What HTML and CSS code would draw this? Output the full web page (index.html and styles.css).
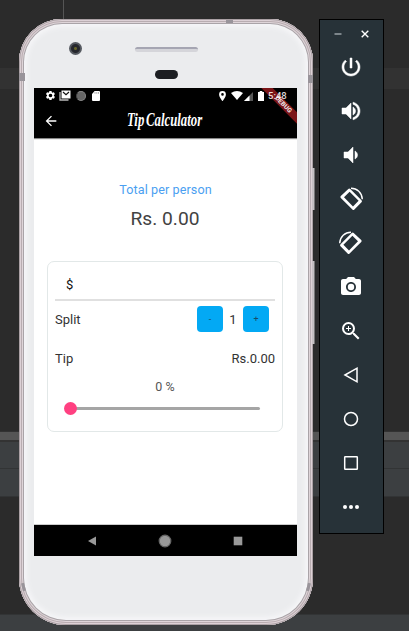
FILE: index.html
```html
<!DOCTYPE html>
<html lang="en">
<head>
<meta charset="utf-8">
<title>Tip Calculator</title>
<link rel="stylesheet" href="styles.css">
</head>
<body>
<div class="guide"></div>
<main class="desk">
  <section class="phone">
    <i class="key key-power"></i><i class="key key-volume"></i>
    <i class="seam seam-left"></i><i class="seam seam-right"></i><i class="seam seam-top"></i>
    <i class="seam seam-low-left"></i><i class="seam seam-low-right"></i>
    <header class="forehead">
      <span class="lens"></span>
      <div class="ear"><span class="speaker"></span><span class="sensor"></span></div>
    </header>
    <div class="screen">
      <div class="status">
        <svg class="s-gear" width="11" height="11" viewBox="0 0 24 24"><path fill-rule="evenodd" d="M19.4 13l.1-1-.1-1 2.1-1.600c.2-.2.3-.4.1-.7l-2-3.400c-.1-.2-.4-.3-.6-.2l-2.500 1-1.700-1-.4-2.600c0-.3-.2-.5-.5-.5h-4c-.3 0-.5.2-.5.5L9 5.100l-1.700 1-2.500-1c-.2-.1-.5 0-.6.2l-2 3.400c-.1.2 0 .5.1.7L4.500 11v2l-2.200 1.600c-.1.2-.2.5-.1.7l2 3.400c.1.2.4.3.6.2l2.500-1 1.700 1 .4 2.600c0 .3.2.5.5.5h4c.3 0 .5-.2.5-.5l.4-2.600 1.700-1 2.500 1c.2.1.5 0 .6-.2l2-3.400c.2-.3.1-.5-.1-.7zM12 16a4 4 0 1 1 0-8 4 4 0 0 1 0 8z"/></svg>
        <svg class="s-mail" width="12" height="11" viewBox="0 0 12 11"><path d="M1 2v8h8.500" fill="none" stroke="#bbb" stroke-width="1.300"/><path d="M2.500.5h9v8h-9z"/><path d="M4 2l3 2.600L10 2" fill="none" stroke="#111" stroke-width="1.200"/></svg>
        <span class="s-ball"></span>
        <svg class="s-card" width="8" height="10" viewBox="0 0 8 10"><path d="M2.600 0H7q1 0 1 1v8q0 1-1 1H1q-1 0-1-1V3z"/><path d="M3 1.200v1.500M4.800 1.200v1.500M6.500 1.200v1.500" stroke="#777" stroke-width=".7"/></svg>
        <svg class="s-pin" width="7" height="10" viewBox="0 0 7 10"><path fill-rule="evenodd" d="M3.500 0A3.400 3.400 0 0 0 .1 3.400C.1 6 3.500 10 3.500 10s3.400-4 3.400-6.600A3.400 3.400 0 0 0 3.500 0zm0 4.700a1.300 1.300 0 1 1 0-2.600 1.300 1.300 0 0 1 0 2.600z"/></svg>
        <svg class="s-wifi" width="12" height="9" viewBox="0 0 12 9"><path d="M0 2Q6-2 12 2L6 9z"/></svg>
        <svg class="s-cell" width="9" height="9" viewBox="0 0 9 9"><path fill="#555" d="M0 9L9 0v9z"/><path d="M0 9l5.500-5.500V9z"/></svg>
        <svg class="s-batt" width="6" height="10" viewBox="0 0 6 10"><path d="M1.700 0h2.600v1H6v9H0V1h1.700z"/></svg>
        <span class="clock">5:48</span>
      </div>
      <div class="debug"><span>DEBUG</span></div>
      <div class="appbar">
        <svg class="back" width="16" height="16" viewBox="0 0 24 24"><path d="M20 11H7.830l5.590-5.590L12 4l-8 8 8 8 1.410-1.410L7.830 13H20z"/></svg>
        <h1>Tip Calculator</h1>
      </div>
      <div class="content">
        <p class="label">Total per person</p>
        <p class="total">Rs. 0.00</p>
        <div class="card">
          <div class="amount">$</div>
          <div class="row split"><span>Split</span><div class="stepper"><button>-</button><span>1</span><button>+</button></div></div>
          <div class="row tip"><span>Tip</span><span>Rs.0.00</span></div>
          <div class="percent">0 %</div>
          <div class="slider"><span class="thumb"></span></div>
        </div>
      </div>
      <nav class="nav">
        <svg width="10" height="10" viewBox="0 0 10 10"><path d="M1 5l8-4.500v9z"/></svg>
        <svg width="14" height="14" viewBox="0 0 14 14"><circle cx="7" cy="7" r="5.800" fill="#999" stroke="#666" stroke-width="1.200"/></svg>
        <svg width="10" height="10" viewBox="0 0 10 10"><path d="M.7.7h8.600v8.600H.7z"/></svg>
      </nav>
    </div>
  </section>
  <aside class="tools">
    <div class="window">
      <svg width="8" height="8" viewBox="0 0 8 8"><path d="M.5 4h7" stroke="#9aa2a6" stroke-width="1.500"/></svg>
      <svg width="8" height="8" viewBox="0 0 8 8"><path d="M.7.7l6.600 6.600M7.300.7L.7 7.300" stroke="#fff" stroke-width="1.400"/></svg>
    </div>
    <svg class="heavy" viewBox="0 0 24 24"><path d="M13 3h-2v10h2V3zm4.830 2.170l-1.420 1.420C17.990 7.860 19 9.810 19 12c0 3.870-3.130 7-7 7s-7-3.130-7-7c0-2.190 1.010-4.140 2.580-5.420L6.170 5.170C4.230 6.820 3 9.260 3 12c0 4.970 4.030 9 9 9s9-4.030 9-9c0-2.740-1.230-5.180-3.170-6.830z"/></svg>
    <svg class="heavy" viewBox="0 0 24 24"><path d="M3 9v6h4l5 5V4L7 9H3zm13.500 3c0-1.770-1.020-3.290-2.500-4.030v8.050c1.480-.73 2.500-2.250 2.500-4.020zM14 3.230v2.060c2.890.86 5 3.540 5 6.710s-2.110 5.850-5 6.710v2.060c4.010-.91 7-4.490 7-8.770s-2.990-7.860-7-8.770z"/></svg>
    <svg class="heavy" viewBox="0 0 24 24"><path d="M18.500 12c0-1.770-1.020-3.290-2.500-4.030v8.050c1.480-.73 2.500-2.250 2.500-4.020zM5 9v6h4l5 5V4L9 9H5z"/></svg>
    <svg viewBox="0 0 24 24"><path fill-rule="evenodd" d="M9.300 1.900q1-.9 2 .1L22.500 13.200q1 1 0 2l-7.100 7.200q-1 1-2 0L1.800 10.900q-1-1 0-2zM10.600 4.700L5 10.300l9 9.100 5.600-5.700z"/><path d="M12 1.300c6 0 11 4.500 11.300 11" fill="none" stroke="#fff" stroke-width="1.400"/></svg>
    <svg class="mirror" viewBox="0 0 24 24"><path fill-rule="evenodd" d="M9.300 1.900q1-.9 2 .1L22.500 13.200q1 1 0 2l-7.100 7.200q-1 1-2 0L1.800 10.900q-1-1 0-2zM10.600 4.700L5 10.300l9 9.100 5.600-5.700z"/><path d="M12 1.300c6 0 11 4.500 11.300 11" fill="none" stroke="#fff" stroke-width="1.400"/></svg>
    <svg viewBox="0 0 24 24"><path fill-rule="evenodd" d="M9 2L7.170 4H4c-1.100 0-2 .9-2 2v12c0 1.100.9 2 2 2h16c1.100 0 2-.9 2-2V6c0-1.100-.9-2-2-2h-3.170L15 2H9zm3 15c-2.760 0-5-2.240-5-5s2.240-5 5-5 5 2.240 5 5-2.240 5-5 5z"/><circle cx="12" cy="12" r="3.200"/></svg>
    <svg viewBox="0 0 24 24"><path d="M15.500 14h-.79l-.28-.27A6.471 6.471 0 0 0 16 9.500 6.500 6.500 0 1 0 9.500 16c1.610 0 3.090-.59 4.230-1.570l.27.28v.79l5 4.990L20.490 19l-4.990-5zm-6 0C7.010 14 5 11.990 5 9.500S7.010 5 9.500 5 14 7.010 14 9.500 11.990 14 9.500 14zM12 10h-2v2H9v-2H7V9h2V7h1v2h2v1z"/></svg>
    <svg class="line" viewBox="0 0 24 24"><path d="M6 12l12-6.800v13.600z"/></svg>
    <svg class="line" viewBox="0 0 24 24"><circle cx="12" cy="12" r="6.500"/></svg>
    <svg class="line" viewBox="0 0 24 24"><rect x="5.700" y="5.700" width="12.600" height="12.600" rx=".5"/></svg>
    <svg viewBox="0 0 24 24"><circle cx="6" cy="12" r="2"/><circle cx="12" cy="12" r="2"/><circle cx="18" cy="12" r="2"/></svg>
  </aside>
</main>
</body>
</html>
```
FILE: styles.css
```css
* { box-sizing: border-box; }
body {
  margin: 0; width: 409px; height: 631px; overflow: hidden; position: relative;
  font-family: Roboto, sans-serif;
  background: linear-gradient(#2b2b2b 68px, #323232 68px 89px, #2b2b2b 89px 431px, #323232 431px 432px, #555 432px 440px, #333 440px 442px, #3c3f41 442px 468px, #323435 468px 469px, #3c3f41 469px 496px, #323435 496px 497px, #2b2b2b 497px 614px, #323435 614px 615px, #3c3f41 615px);
}
svg { display: block; fill: #fff; flex: none; }
.guide { position: absolute; left: 63px; top: 0; width: 1px; height: 20px; background: #555; }
.desk { display: flex; align-items: flex-start; gap: 6px; padding: 19px 0 0 19px; }
.phone {
  position: relative; width: 294px; height: 606px; padding: 0 16px 0 15px; flex: none;
  border-radius: 43px 43px 47px 47px; background: #ebecee;
  box-shadow: inset 0 0 0 1px #aaa0a4, inset 0 0 0 2px #ddd1d6, inset 0 0 0 3px #b9adb1, inset 0 0 0 4px #dfd5d9, inset 0 0 0 5px #aaa4a8, inset 0 0 5px 8px #f6f6f8;
}
.key { position: absolute; right: -2px; width: 3px; background: #c5bfc2; border-right: 1px solid #777; }
.key-power { top: 149px; height: 42px; }
.key-volume { top: 242px; height: 83px; }
.seam { position: absolute; background: #99949a; }
.seam-left { left: 0; top: 54px; width: 6px; height: 8px; }
.seam-right { right: 0; top: 56px; width: 5px; height: 8px; }
.seam-top { left: 207px; top: 1px; width: 7px; height: 3px; }
.seam-low-left { left: 3px; top: 564px; width: 3px; height: 8px; transform: rotate(-14deg); }
.seam-low-right { right: 3px; top: 564px; width: 3px; height: 8px; transform: rotate(14deg); }
.forehead { height: 69px; display: flex; padding: 23px 0 0 35px; }
.lens { width: 13px; height: 13px; border-radius: 50%; background: radial-gradient(circle, #65632a 0 1px, #25272d 2px 4px, #555960 5px); }
.ear { display: flex; flex-direction: column; align-items: center; margin-left: 53px; width: 63px; padding-top: 5px; gap: 18px; }
.speaker { width: 63px; height: 5px; border-radius: 3px; background: #d5d5da; border-top: 2px solid #a5a5b2; }
.sensor { width: 23px; height: 9px; border-radius: 5px; background: #1c1e22; }
.screen { position: relative; width: 263px; height: 468px; background: #fff; display: flex; flex-direction: column; overflow: hidden; }
.status { height: 15px; background: #000; display: flex; align-items: center; padding-left: 11px; }
.s-mail { margin-left: 3px; }
.s-ball { width: 10px; height: 10px; border-radius: 50%; margin-left: 5px; background: #666; border: 1px solid #888; border-left-color: #444; }
.s-card { margin-left: 6px; }
.s-pin { margin-left: 119px; }
.s-wifi { margin-left: 5px; }
.s-cell { margin: 1px 0 0 1px; }
.s-batt { margin-left: 5px; }
.clock { position: relative; z-index: 2; color: #fff; font-size: 9.500px; line-height: 15px; font-weight: 500; margin-left: 4px; opacity: .85; }
.debug { position: absolute; left: 217px; top: 11px; width: 62px; height: 8px; background: #7b1518; transform: rotate(45deg); text-align: center; color: #e8dede; font-size: 6.500px; line-height: 8px; font-weight: 900; }
.debug span { display: block; padding-left: 4px; }
.appbar { height: 35px; flex: none; background: #000; display: flex; align-items: center; padding-left: 9px; box-shadow: 0 1px 1px #888; }
.appbar h1 { margin: 0 0 2px 68px; font: italic bold 18px/26px "Liberation Serif", serif; color: #fff; white-space: nowrap; word-spacing: -2px; transform: scaleX(.71); transform-origin: left center; }
.content { flex: 1; display: flex; flex-direction: column; padding: 0 13px; color: #333; }
.content p { margin: 0; text-align: center; }
.label { padding-top: 44px; font-size: 12.600px; line-height: 15px; color: #4b9ff1; letter-spacing: .1px; }
.content .total { margin-top: 10px; margin-right: 1px; font-size: 19.200px; line-height: 24px; color: #424242; }
.card { height: 171px; margin-top: 30px; border: 1px solid #e2e8e8; border-radius: 7px; padding: 0 7px; width: 236px; font-size: 13px; }
.amount { height: 39px; padding: 15px 0 0 11px; border-bottom: 2px solid #e0e0e0; color: #111; line-height: 16px; font-size: 13px; }
.row { display: flex; justify-content: space-between; align-items: center; }
.split { height: 36px; padding-right: 6px; }
.stepper { display: flex; align-items: center; }
.stepper span { width: 20px; text-align: center; }
.stepper button { width: 26px; height: 26px; border: 0; border-radius: 4px; padding: 0; background: #03a9f4; color: #174d68; font: 9px Roboto, sans-serif; }
.tip { height: 43px; }
.percent { text-align: center; line-height: 16px; margin-top: -1px; font-size: 12.500px; color: #555; }
.slider { height: 3px; margin: 12px 15px 0 15px; background: #a5a5a5; border-radius: 2px; display: flex; align-items: center; }
.thumb { width: 13px; height: 13px; border-radius: 50%; background: #ff4081; margin-left: -6px; flex: none; }
.nav { height: 32px; border-top: 1px solid #ccc; background: #000; display: flex; align-items: center; padding: 0 54px 0 53px; justify-content: space-between; }
.nav svg { fill: #999; }
.tools { width: 65px; height: 515px; border: 1px solid #000; background: #273238; display: flex; flex-direction: column; align-items: center; gap: 20px; padding-right: 2px; }
.tools > svg { width: 24px; height: 24px; }
.window { display: flex; gap: 19px; height: 15px; padding: 10px 0 0 2px; flex: none; }
.mirror { transform: scaleX(-1); }
.heavy { stroke: #fff; stroke-width: .5; }
.tools .line { fill: none; stroke: #fff; stroke-width: 1.500; }
```
